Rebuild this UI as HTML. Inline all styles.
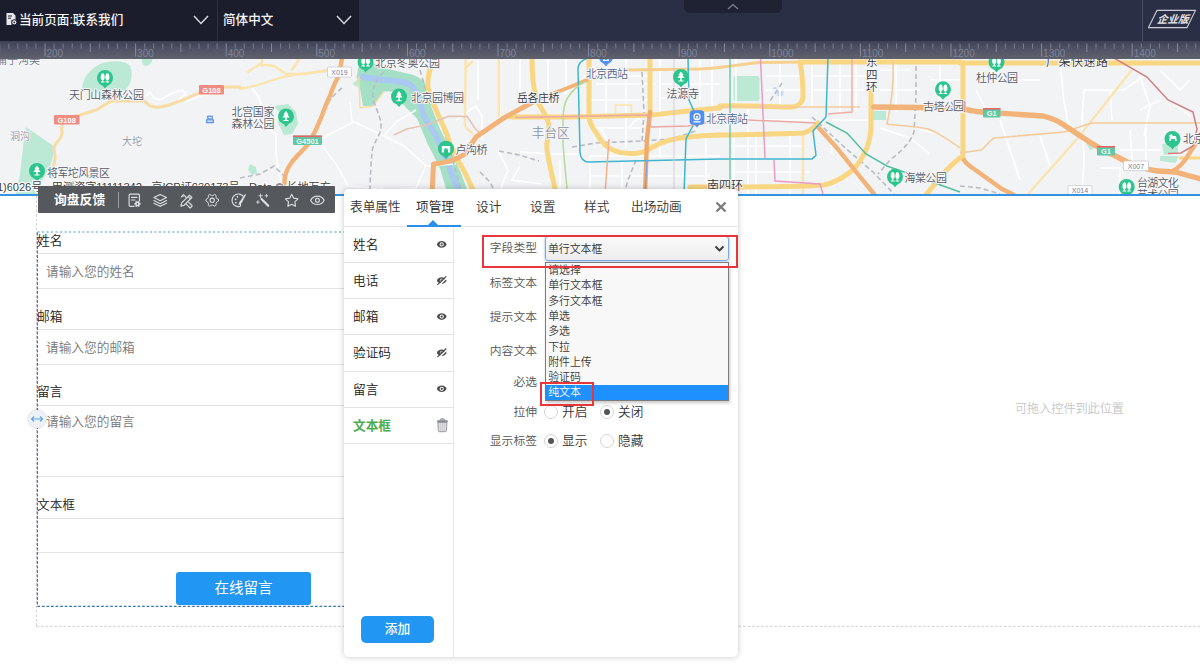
<!DOCTYPE html>
<html lang="zh-CN">
<head>
<meta charset="utf-8">
<title>联系我们</title>
<style>
*{box-sizing:border-box;margin:0;padding:0}
html,body{width:1200px;height:672px;overflow:hidden;background:#fff}
body{font-family:"Liberation Sans","Noto Sans CJK SC",sans-serif;position:relative;color:#333;font-weight:350}
.abs{position:absolute}
/* top bar */
#topbar{left:0;top:0;width:1200px;height:41px;background:#2b2f45}
#topleft{left:0;top:0;width:359px;height:41px;background:#1b1d2c}
.tb-txt{color:#f4f4f4;font-weight:500;font-size:12.600px;line-height:16px;white-space:nowrap}
#sep1{left:217px;top:0;width:1px;height:41px;background:#2d3042}
#toptab{left:684px;top:0;width:98px;height:13px;background:#1f2233;border-radius:0 0 6px 6px}
#sep2{left:1142px;top:0;width:1px;height:41px;background:#4a4e65}
/* ruler */
#ruler{left:0;top:40.500px;width:1200px;height:18.100px;background:linear-gradient(#3e4154,#505365 45%,#5f616e)}
/* map */
#map{left:0;top:58px;width:1200px;height:137px;background:#f2f3f5;overflow:hidden}
#blueline{left:0;top:193.800px;width:1200px;height:2.200px;background:#3492e0}
/* toolbar */
#toolbar{left:38px;top:186px;width:297px;height:27px;background:#55585d;border-radius:1px}
/* form */
.lbl{font-size:12.7px;line-height:16px;color:#222;white-space:nowrap}
.inp{left:38px;width:306px;border-top:1px solid #e3e3e3;border-bottom:1px solid #e3e3e3;background:#fff}
.ph{font-size:12.7px;line-height:16px;color:#777;white-space:nowrap}
#btn{left:176px;top:571.5px;width:135px;height:33px;background:#2196f3;border-radius:3px;color:#fff;font-size:14.500px;line-height:33px;text-align:center;font-weight:400}
/* panel */
#panel{left:343.500px;top:189.300px;width:394.500px;height:467.700px;background:#fff;border-radius:5px;box-shadow:0 0 6px rgba(0,0,0,.22)}
.tab{top:199px;font-size:12.7px;line-height:16px;color:#333;white-space:nowrap}
.row{left:344px;width:109px;height:36.500px;border-bottom:1px solid #e4e4e4}
.row span{position:absolute;left:9px;top:10.400px;font-size:12.7px;line-height:16px;color:#222}
.flabel{font-size:11.800px;line-height:16px;color:#555;text-align:right;width:70px;left:467px;white-space:nowrap}
.radio{width:14px;height:14px;border-radius:50%;border:1px solid #d4d4d4;background:#fff}
.radio.on::after{content:"";position:absolute;left:3px;top:3px;width:6px;height:6px;border-radius:50%;background:#555}
.rl{font-size:12.7px;line-height:16px;color:#333;white-space:nowrap}
.opt{left:545px;width:182px;height:15.300px;font-size:10.900px;line-height:15.300px;padding-left:2.700px;color:#3a3a3a;white-space:nowrap}
</style>
</head>
<body>
<!-- MAP -->
<div id="map" class="abs">
<svg id="mapsvg" width="1200" height="136" viewBox="0 58 1200 136" style="position:absolute;left:0;top:0;font-family:'Liberation Sans','Noto Sans CJK SC',sans-serif">
<rect x="0" y="40" width="1200" height="160" fill="#f2f3f5"/>
<!-- green areas -->
<g fill="#bce9d5">
<path d="M82 90c0-10 6-20 18-26c10-4 26-4 30 2c3 6 2 16-3 22c-4 5-12 7-20 7z"/>
<path d="M142 58h10c1 4-2 7-6 8c-3 0-5-4-4-8z"/>
<path d="M26 127l29 20l-4 17l-9 17l-4 13h-22l4-20l4-35z"/>
<path d="M274 106l14-2l8 8l2 12l-6 10l-8 1l-6-12l2-10z"/>
<path d="M250 164l6 3l1 6l-5 2l-4-5z"/>
<rect x="733.5" y="76" width="26" height="25" rx="2"/>
<rect x="872" y="111" width="14" height="9"/>
<path d="M1162 144l16-1v10l-14 2z M1160 156l18 0l-2 7l-16-2z"/>
<path d="M1086 143l6 0l2 5l-4 2z"/>
</g>
<!-- river: green banks + water -->
<path d="M352 84l8-6l6 4l-6 6z" fill="#bce9d5"/>
<path d="M359.800 58l26 10.500l27 6.200c8 3 12 7 14.700 12.500l4.200 20.800l8.300 21l10.400 20.700l10.400 23l6.200 16.600l2 6h-20l-2.750-6l-6.250-20.800l-12.500-25l-10.500-25l-12.400-12.500l-12.600-14.600h-8.250l-10.450 14.600h-10.300l-3.200-18.750l-3.100-10.450z" fill="#a5dfc6"/>
<path d="M363 76.800c4 1 8 1.500 12.400 2.200c10 1.500 22 1.500 31.300 4c5 2 8 6 10.300 10.500c3 6 4 14 6.300 20.800c3 7 8 14 12.500 20.700l12.500 29.300l8.400 22.700l3 10" fill="none" stroke="#a9c9f3" stroke-width="6" stroke-linecap="round"/>
<path d="M358.750 76.800l1.250 31.200l13-2l11-14.600" fill="none" stroke="#f8dca6" stroke-width="1.500"/>
<circle cx="780" cy="93" r="3.5" fill="#c5daf5"/><circle cx="775" cy="89" r="2" fill="#c5daf5"/>
<!-- minor roads (white) -->
<g fill="none" stroke="#fff" stroke-width="1.6">
<path d="M146 96l4-4l4 6l6 2l10-6l12-4l4 4l-8 6M186 102l14-6l10-2M252 88l6 8l4 10M262 106l-4 12l6 8l12 8l0 20l2 12l4 26"/>
<path d="M318 140l36-18l30 14l20 10l22 20l-10 22l-24 2l-44-4l-12-22z"/>
<path d="M384 136l12-14l20-12M352 122l-2-20M426 166l30-2M382 186l-4 10M456 120l20-14l6 10l0 24"/>
<path d="M478 60v40M500 58v60M520 58v44M548 58v46M566 58v36M600 76h50M606 58v60M626 58v90M660 58v56M674 58v78M700 58v42M712 58v50"/>
<path d="M596 84h60M590 100h60M660 84h60M660 98h34M592 128h50M600 128l8 12l4 14M628 128l10-10l12 10M660 128v30M674 136v58M706 136v58M590 156h130M590 176h120M520 152l30 2l30 0M498 150l10 20l-8 20M520 166l-8 14l30 4M560 160v34M590 156v38M622 162v32"/>
<path d="M736 58v50M748 106v88M760 62h40M766 76h38M766 90h38M780 62v44M812 62v44M812 76h56M812 90h56M840 62v50M856 62v50M730 120h80M730 146h76M734 136v58M756 136v58M790 136v58M730 172h80M832 120h36M832 134v20M880 70h30M896 62v50M880 90h40M880 128l30 10l20 16M920 130l20 4l20 14M940 62v40M930 80h30"/>
<path d="M976 90l10 20M990 70l20 10l30 0M1060 62l4 40l6 30M1084 90h40l20-14M1084 90l-2 30l2 40l-2 34M1110 90l2 30M1140 76l10 30l-6 30M1160 70l20 20l10-10M1170 100l20 16M1000 120l10 30l10 30M1040 136l10 30M1130 130l2 30M1146 128v34M1120 150h40M1100 168h20v26M1160 100l-20 10"/>
</g>
<!-- railways -->
<g fill="none" stroke="#b9bcc4" stroke-width="1.6" stroke-dasharray="5 3">
<path d="M384 72c-8 8-12 16-11 26c2 10 8 18 8 28c0 10-8 16-9 26c-1 12-2 26-2 42"/>
<path d="M342 88c-8 6-14 14-20 24"/>
<path d="M240 178l20-4l14-8l10 10l4 18"/>
<path d="M420 70l6 20l14 30l10 30l12 44"/>
<path d="M642 72l2 40l-2 30M572 147l24-4l46-2l30-2l24-8"/>
<path d="M499 151l20 4l20 6M480 172l10 10l6 12M636 160l-8 20l-4 14"/>
<path d="M782 83l-12 18M812 117l30 28l32 28l20 21"/>
<path d="M916 66l0 30l-2 36c-4 12-14 20-24 28l-12 14"/>
<path d="M960 186l20 2l20 6"/>
</g>
<!-- light-yellow thin roads -->
<g fill="none" stroke="#fbe4ad" stroke-width="2.4" stroke-linecap="round">
<path d="M240 89c10-2 20-4 30-8c16-6 36-8 56-10"/>
<path d="M248 72l12-8l14 2l12 8l20 0l22-4M262 60v6M300 58l-8 12"/>
<path d="M499 58v58M465.800 60l-1 64.750c1 4 4 6 7.200 8.250M472 62l-7 6.500"/>
<path d="M1131 71l-54 68l-48 54"/>
<path d="M803 135v59"/>

<path d="M615.500 112v-7h16v7" stroke-width="1.600"/>
</g>
<!-- yellow roads -->
<g fill="none" stroke="#f9d682" stroke-width="5" stroke-linecap="round" stroke-linejoin="round">
<path d="M240 87h-11c-10 0-14 0-24 4c-10 3-18 8-28 11c-8 3-14 6-22 5c-6 0-8-4-11-6h-32c-6 2-10 6-16 9c-6 2-10 3-16 5l-14 4c-4 4-5 8-4 14c0 6-5 8-7 12c-3 6 1 8 0 14c-1 6-3 12-3 18" stroke="#f8dca6" stroke-width="3"/>
<path d="M532 58c0 14 1 28 4 40c4 10 12 18 13 28c0 8-3 16-2 24c2 14 6 28 9 44"/>
<path d="M589 58v56c0 8 3 14 8 20c4 8 10 14 18 17c8 3 16 3 24 2c6-1 10-4 14-6c10-6 24-9 36-10c10-1 20-2 31-2"/>
<path d="M650 58v56"/>
<path d="M511 117l60 0l80-2c20-2 46-5 69-7"/>
<path d="M627 70l73-1c30-1 45-6 60-6.500l43-.500" stroke="#f7d08f" stroke-width="3"/><path d="M803 62h157"/>
<path d="M960 63h240"/>
<path d="M800 62c2 10 3 22 3 34c0 6-4 10-10 11c-20 0-50-2-73-1"/>
<path d="M720 135c28 0 56-1 83-2c8-2 12-6 15-10"/>
<path d="M871 89v40c-1 10-3 18-7 25c-4 8-8 14-15 19c-8 6-16 10-25 12c-30 2-70 2-104 2"/>
<path d="M720 187h-30"/>
<path d="M963 63v96"/>
<path d="M434 58c-4 10-7 20-6 29c2 12 8 22 12 32c4 8 8 16 10 25c4 10 10 20 15 29l10 21"/>
<path d="M960 158c-8 6-14 12-19 19c-6 6-10 12-15 18"/>
<path d="M1200 158h-20" stroke-width="3"/>
</g>
<!-- light orange thin roads -->
<g fill="none" stroke="#f5cb9c" stroke-width="1.6">
<path d="M893 62c1 20-2 44-6 62c14 2 28 2 41 5c12 4 22 12 32 19"/>
<path d="M960 153l21-3c6-4 8-10 14-12l69-6c10-2 20-8 29-9h107"/>
<path d="M860 107h-140"/><path d="M394 135l12.700-6l20.800-4.250l20.500-8.350h19l8.400 12.600l4.600 4" stroke="#e6c4b4"/>
</g>
<!-- orange roads -->
<g fill="none" stroke="#f3b277" stroke-width="4.4" stroke-linecap="round" stroke-linejoin="round">
<path d="M342 58c-1 8-2 12-4 19c-3 6-6 12-8 19c-4 8-6 14-9 22c-4 10-8 18-12 25c-6 8-12 12-17 19c-4 5-6 10-7 15l-2 17"/>
<path d="M432 194l1.500-30c12-1 24-5 31.500-10l11-17l27-18.500l34-18.750" stroke-width="5"/>
<path d="M537 99.750l33-12.750l17-7" stroke-width="3.600"/>
<path d="M650 112c-1 10-2 18-3 27l-2 55" stroke="#f0aa6c"/>
<path d="M818 127l19 21l20 25l17 21"/>
<path d="M874 107l86 1c8 2 14 4 23 4l60 4c8 2 14 4 21 9l21 14c6 4 12 8 17 10l25 13c10 4 20 8 31 9c8 1 14 0 21 2l22 6" stroke-width="5.400"/>
<path d="M1172 171c8-3 13-10 17-17l11-17" stroke-width="4.400"/>
<path d="M964 160c2 4 6 6 10 9l28 20l12 6"/>

</g>
<!-- subway lines -->
<g fill="none" stroke-width="1.5">
<path d="M588 58c-6 2-10 6-10 11l2 83c0 6 4 10 8 10l132-3l92 0c2-2 4-3 4-4l-3-24l13-14l2-60" stroke="#3fb6cf"/>
<path d="M688 58l1 42l8 18l-11 21l-2 55" stroke="#3fb6cf"/>
<path d="M586 81c-8 4-14 10-18.500 17c-4 6-4 14-4.500 20v25c1 16 3 34 4.500 51" stroke="#b7d99a"/>
<path d="M609 139l-4 55" stroke="#f0b08a"/>
<path d="M647 160l-2 34" stroke="#7f9fe0" stroke-width="1.2"/>
<path d="M730 58v136" stroke="#72c9a6"/><path d="M674 58v136" stroke="#cfc6d6" stroke-width="1"/>
<path d="M826 122l21 11l19 21l21 12l73 26" stroke="#52bfa0"/>
<path d="M760.500 58l4.500 100M774 160l1 21l45 3l3 10" stroke="#e89cc4"/>
<path d="M515 117.500l132-2.500l4 12l37-1l40-7l88 4" stroke="#e9aaa6"/>
<path d="M852 58v54l-24 2" stroke="#efb0a8"/>
<path d="M1114 58l33 19l21 23l25 12l4 17l-4 17l-12 7l-13 .5" stroke="#d27f80" stroke-width="1.500"/>
</g>
<!-- road badges -->
<g font-size="7.5" text-anchor="middle" font-weight="bold">
<rect x="199" y="85" width="25" height="9.500" rx="1" fill="#f08c82"/><text x="211.500" y="92.600" fill="#fff">G108</text>
<rect x="54" y="115" width="25.500" height="9.500" rx="1" fill="#f08c82"/><text x="66.700" y="122.600" fill="#fff">G108</text>
<rect x="293" y="135.500" width="29" height="9.500" rx="1" fill="#62c7a4"/><rect x="293" y="135.500" width="29" height="1.600" fill="#e8666a"/><text x="307.500" y="143.600" fill="#eafaf3">G4501</text>
<rect x="983" y="108" width="17.500" height="9.500" rx="1" fill="#62c7a4"/><rect x="983" y="108" width="17.500" height="1.600" fill="#e8666a"/><text x="991.800" y="116" fill="#eafaf3">G1</text>
<rect x="1097" y="146" width="18" height="9.500" rx="1" fill="#62c7a4"/><rect x="1097" y="146" width="18" height="1.600" fill="#e8666a"/><text x="1106" y="154" fill="#eafaf3">G1</text>
<g font-weight="normal" font-size="7">
<rect x="327.500" y="67" width="24" height="10" rx="1" fill="#fff" stroke="#c9ccd3" stroke-width=".8"/><text x="339.500" y="74.600" fill="#77809a">X019</text>
<rect x="1123.500" y="161" width="25" height="9.600" rx="1" fill="#fff" stroke="#c9ccd3" stroke-width=".8"/><text x="1136" y="168.500" fill="#77809a">X007</text>
<rect x="1068" y="185.600" width="24" height="10" rx="1" fill="#fff" stroke="#c9ccd3" stroke-width=".8"/><text x="1080" y="193" fill="#77809a">X014</text>
</g></g>
<!-- icons -->
<g transform="translate(105 78)"><circle r="8" fill="#2dc48d"/><path d="M0 8L-2.5 6.5h5z M0 10.5l-2.8-3.4h5.6z" fill="#2dc48d"/><path d="M-2.3 -4.8c1.3 0 2 1.6 2 4.3c0 1.6-.6 2.4-1.4 2.5v1.6h1.2v1h-3.6v-1h1.2v-1.6c-.8-.1-1.4-.9-1.4-2.5c0-2.7.7-4.3 2-4.3z" fill="#fff"/><path d="M2.4 -4.8c1.3 0 2 1.6 2 4.3c0 1.6-.6 2.4-1.4 2.5v1.6h1.2v1h-3.6v-1h1.2v-1.6c-.8-.1-1.4-.9-1.4-2.5c0-2.7.7-4.3 2-4.3z" fill="#fff"/></g>
<g transform="translate(37 171)"><circle r="8" fill="#2dc48d"/><path d="M0 10.5l-2.8-3.4h5.6z" fill="#2dc48d"/><path d="M0 -5.5l2.6 3.5h-1.2l2.2 3h-2.8v2.6h1.8v1h-5.2v-1h1.8v-2.6h-2.8l2.2-3h-1.2z" fill="#fff"/></g>
<g transform="translate(286 116.400)"><circle r="8" fill="#2dc48d"/><path d="M0 10.5l-2.8-3.4h5.6z" fill="#2dc48d"/><path d="M0 -5.5l2.6 3.5h-1.2l2.2 3h-2.8v2.6h1.8v1h-5.2v-1h1.8v-2.6h-2.8l2.2-3h-1.2z" fill="#fff"/></g>
<g transform="translate(365.600 62)"><circle r="8" fill="#2dc48d"/><path d="M0 8L-2.5 6.5h5z M0 10.5l-2.8-3.4h5.6z" fill="#2dc48d"/><path d="M-2.3 -4.8c1.3 0 2 1.6 2 4.3c0 1.6-.6 2.4-1.4 2.5v1.6h1.2v1h-3.6v-1h1.2v-1.6c-.8-.1-1.4-.9-1.4-2.5c0-2.7.7-4.3 2-4.3z" fill="#fff"/><path d="M2.4 -4.8c1.3 0 2 1.6 2 4.3c0 1.6-.6 2.4-1.4 2.5v1.6h1.2v1h-3.6v-1h1.2v-1.6c-.8-.1-1.4-.9-1.4-2.5c0-2.7.7-4.3 2-4.3z" fill="#fff"/></g>
<g transform="translate(399 96.600)"><circle r="8" fill="#2dc48d"/><path d="M0 10.5l-2.8-3.4h5.6z" fill="#2dc48d"/><path d="M0 -5.5l2.6 3.5h-1.2l2.2 3h-2.8v2.6h1.8v1h-5.2v-1h1.8v-2.6h-2.8l2.2-3h-1.2z" fill="#fff"/></g>
<g transform="translate(681 77)"><circle r="8" fill="#2dc48d"/><path d="M0 10.5l-2.8-3.4h5.6z" fill="#2dc48d"/><path d="M0 -5.5l2.6 3.5h-1.2l2.2 3h-2.8v2.6h1.8v1h-5.2v-1h1.8v-2.6h-2.8l2.2-3h-1.2z" fill="#fff"/></g>
<g transform="translate(943 89.300)"><circle r="8" fill="#2dc48d"/><path d="M0 8L-2.5 6.5h5z M0 10.5l-2.8-3.4h5.6z" fill="#2dc48d"/><path d="M-2.3 -4.8c1.3 0 2 1.6 2 4.3c0 1.6-.6 2.4-1.4 2.5v1.6h1.2v1h-3.6v-1h1.2v-1.6c-.8-.1-1.4-.9-1.4-2.5c0-2.7.7-4.3 2-4.3z" fill="#fff"/><path d="M2.4 -4.8c1.3 0 2 1.6 2 4.3c0 1.6-.6 2.4-1.4 2.5v1.6h1.2v1h-3.6v-1h1.2v-1.6c-.8-.1-1.4-.9-1.4-2.5c0-2.7.7-4.3 2-4.3z" fill="#fff"/></g>
<g transform="translate(895 176.800)"><circle r="8" fill="#2dc48d"/><path d="M0 8L-2.5 6.5h5z M0 10.5l-2.8-3.4h5.6z" fill="#2dc48d"/><path d="M-2.3 -4.8c1.3 0 2 1.6 2 4.3c0 1.6-.6 2.4-1.4 2.5v1.6h1.2v1h-3.6v-1h1.2v-1.6c-.8-.1-1.4-.9-1.4-2.5c0-2.7.7-4.3 2-4.3z" fill="#fff"/><path d="M2.4 -4.8c1.3 0 2 1.6 2 4.3c0 1.6-.6 2.4-1.4 2.5v1.6h1.2v1h-3.6v-1h1.2v-1.6c-.8-.1-1.4-.9-1.4-2.5c0-2.7.7-4.3 2-4.3z" fill="#fff"/></g>
<g transform="translate(996.500 62)"><circle r="8" fill="#2dc48d"/><path d="M0 8L-2.5 6.5h5z M0 10.5l-2.8-3.4h5.6z" fill="#2dc48d"/><path d="M-2.3 -4.8c1.3 0 2 1.6 2 4.3c0 1.6-.6 2.4-1.4 2.5v1.6h1.2v1h-3.6v-1h1.2v-1.6c-.8-.1-1.4-.9-1.4-2.5c0-2.7.7-4.3 2-4.3z" fill="#fff"/><path d="M2.4 -4.8c1.3 0 2 1.6 2 4.3c0 1.6-.6 2.4-1.4 2.5v1.6h1.2v1h-3.6v-1h1.2v-1.6c-.8-.1-1.4-.9-1.4-2.5c0-2.7.7-4.3 2-4.3z" fill="#fff"/></g>
<g transform="translate(1126.700 187)"><circle r="8" fill="#2dc48d"/><path d="M0 8L-2.5 6.5h5z M0 10.5l-2.8-3.4h5.6z" fill="#2dc48d"/><path d="M-2.3 -4.8c1.3 0 2 1.6 2 4.3c0 1.6-.6 2.4-1.4 2.5v1.6h1.2v1h-3.6v-1h1.2v-1.6c-.8-.1-1.4-.9-1.4-2.5c0-2.7.7-4.3 2-4.3z" fill="#fff"/><path d="M2.4 -4.8c1.3 0 2 1.6 2 4.3c0 1.6-.6 2.4-1.4 2.5v1.6h1.2v1h-3.6v-1h1.2v-1.6c-.8-.1-1.4-.9-1.4-2.5c0-2.7.7-4.3 2-4.3z" fill="#fff"/></g>
<g transform="translate(446 148.700)"><circle r="8" fill="#2dc48d"/><path d="M0 10.500l-2.800-3.400h5.600z" fill="#2dc48d"/><path d="M-4.200 3.800v-6.600h8.400v6.600h-2.200v-2.200a2 2 0 0 0-4 0v2.200z" fill="#fff"/></g>
<g transform="translate(1172.500 139)"><circle r="8" fill="#2dc48d"/><path d="M0 10.500l-2.800-3.400h5.600z" fill="#2dc48d"/><path d="M-3.500 -3.500l2.500-1.500l1.500 2h3l.8 5h-1.400l-.6-2h-3.600l-.6 2h-1.400l.6-4z" fill="#fff"/></g>
<g transform="translate(606 57)"><circle r="7" fill="#4f8ff0"/><path d="M0 9.500l-2.500-3.200h5z" fill="#4f8ff0"/><path d="M-3 3.500h6M-2 3.500v-3h4v3" stroke="#fff" stroke-width="1.200" fill="none"/></g>
<g transform="translate(697 117.500)"><rect x="-7.300" y="-7.300" width="14.600" height="14.600" rx="3.500" fill="#4f8ff0"/><path d="M0 10l-2.500-3h5z" fill="#4f8ff0"/><circle cy="-.8" r="3" fill="none" stroke="#fff" stroke-width="1.300"/><path d="M-3.600 4.300h7.200M-1.200 -.8h2.400M0 -.8v3" stroke="#fff" stroke-width="1.200" fill="none"/></g>
<g transform="translate(210 119.500)" fill="none" stroke="#5b95e8" stroke-width="1.300"><rect x="-2.200" y="-3.200" width="4.400" height="2.600"/><path d="M-3.300 3h6.600v-2.600h-6.600z"/></g>
<!-- labels -->
<g font-size="11" fill="#555a66" stroke="#f7f7f9" stroke-width="2" paint-order="stroke" stroke-linejoin="round">
<text x="-4" y="63.500" fill="#6d7686">蒲子沟美</text>
<text x="69" y="98.500" textLength="75">天门山森林公园</text>
<text x="47" y="176.600" textLength="63">将军坨风景区</text>
<text x="231.500" y="116" textLength="43">北宫国家</text>
<text x="231.500" y="127.700" textLength="43">森林公园</text>
<text x="375" y="67" textLength="65">北京冬奥公园</text>
<text x="411" y="101.700" textLength="53">北京园博园</text>
<text x="455.600" y="154" textLength="32">卢沟桥</text>
<text x="517" y="101.700" textLength="42.600" fill="#33363d">岳各庄桥</text>
<text x="586" y="78" textLength="42" fill="#586a8c">北京西站</text>
<text x="666.500" y="98" textLength="32.500">法源寺</text>
<text x="706" y="123" textLength="42" fill="#586a8c">北京南站</text>
<text x="707" y="189.500" font-size="12" textLength="36" fill="#33363d">南四环</text>
<text x="866" y="66" font-size="11.500" fill="#33363d">东</text>
<text x="866" y="79" font-size="11.500" fill="#33363d">四</text>
<text x="866" y="90.500" font-size="11.500" fill="#33363d">环</text>
<text x="923" y="111" textLength="43">古塔公园</text>
<text x="904.400" y="182" textLength="42.600">海棠公园</text>
<text x="976" y="81.500" textLength="42">杜仲公园</text>
<text x="1046" y="66.300" font-size="12" textLength="62" fill="#33363d">广渠快速路</text>
<text x="1183" y="143">北京</text>
<text x="1137" y="186.700" textLength="41.700">台湖文化</text>
<text x="1137" y="198.500" textLength="41.700">艺术公园</text>
<text x="953" y="110">园</text>
</g>
<g font-size="10" fill="#8b95aa" stroke="#f7f7f9" stroke-width="1.600" paint-order="stroke">
<text x="10" y="139.500">洞沟</text>
<text x="122" y="145">大坨</text>
<text x="531.700" y="136.800" font-size="12.600" textLength="38">丰台区</text>
</g>
<!-- copyright -->
<text x="-3" y="190.500" font-size="11.300" fill="#3d3d3d" stroke="#fbfbfb" stroke-width="2.400" paint-order="stroke" textLength="334" style="white-space:pre">1)6026号 - 甲测资字11111342 - 京ICP证030173号 - Data © 长地万方</text>

</svg>
</div>
<div id="blueline" class="abs"></div>

<!-- TOP BAR -->
<div id="topbar" class="abs"></div>
<div id="topleft" class="abs"></div>
<div id="sep1" class="abs"></div>
<svg class="abs" style="left:5px;top:12.400px" width="13" height="14" viewBox="0 0 13 14"><path d="M1.5 1h6.5l2.5 2.5v4.5h-4v5h-5z" fill="#e8e8ea"/><circle cx="9.3" cy="10.3" r="2.6" fill="#e8e8ea" stroke="#1b1d2c" stroke-width="1"/><circle cx="9.3" cy="10.3" r="0.9" fill="#1b1d2c"/><path d="M3 4h4M3 6.2h3" stroke="#1b1d2c" stroke-width="1"/></svg>
<div class="abs tb-txt" style="left:19px;top:11.600px">当前页面:联系我们</div>
<svg class="abs" style="left:192px;top:14.200px" width="18" height="12" viewBox="0 0 18 12"><path d="M2 2l7 7.5l7-7.5" fill="none" stroke="#dcdde2" stroke-width="1.4"/></svg>
<div class="abs tb-txt" style="left:223px;top:11.600px">简体中文</div>
<svg class="abs" style="left:335px;top:14.200px" width="18" height="12" viewBox="0 0 18 12"><path d="M2 2l7 7.5l7-7.5" fill="none" stroke="#dcdde2" stroke-width="1.4"/></svg>
<div id="toptab" class="abs"></div>
<svg class="abs" style="left:726px;top:2px" width="14" height="9" viewBox="0 0 14 9"><path d="M2 7l5-4.5l5 4.5" fill="none" stroke="#7d8094" stroke-width="1.3"/></svg>
<div id="sep2" class="abs"></div>
<svg class="abs" style="left:1148px;top:8px" width="50" height="22" viewBox="0 0 50 22" font-family="'Liberation Sans','Noto Sans CJK SC',sans-serif"><path d="M9 2.400H47.500L39 19.600H.500z" fill="none" stroke="#c9ccd8" stroke-width="1.100"/><text x="24.500" y="15.300" font-size="10.500" font-weight="bold" fill="#e3e4ea" text-anchor="middle" transform="translate(5.570 0) skewX(-20)">企业版</text></svg>

<!-- RULER -->
<div id="ruler" class="abs"></div>
<svg id="rulersvg" class="abs" style="left:0;top:40px" width="1200" height="18" viewBox="0 0 1200 18" font-family="'Liberation Sans',sans-serif">
<path d="M-0.3 3.500V12" stroke="#9397a8" stroke-width=".800"/>
<path d="M8.8 3.500V8.600" stroke="#8b8fa1" stroke-width=".700"/>
<path d="M17.8 3.500V8.600" stroke="#8b8fa1" stroke-width=".700"/>
<path d="M26.9 3.500V8.600" stroke="#8b8fa1" stroke-width=".700"/>
<path d="M35.9 3.500V8.600" stroke="#8b8fa1" stroke-width=".700"/>
<path d="M45.0 3.500V16.500" stroke="#9397a8" stroke-width=".800"/>
<text x="46.5" y="16.5" font-size="10" fill="#7e8398">200</text>
<path d="M54.1 3.500V8.600" stroke="#8b8fa1" stroke-width=".700"/>
<path d="M63.1 3.500V8.600" stroke="#8b8fa1" stroke-width=".700"/>
<path d="M72.2 3.500V8.600" stroke="#8b8fa1" stroke-width=".700"/>
<path d="M81.2 3.500V8.600" stroke="#8b8fa1" stroke-width=".700"/>
<path d="M90.3 3.500V12" stroke="#9397a8" stroke-width=".800"/>
<path d="M99.4 3.500V8.600" stroke="#8b8fa1" stroke-width=".700"/>
<path d="M108.4 3.500V8.600" stroke="#8b8fa1" stroke-width=".700"/>
<path d="M117.5 3.500V8.600" stroke="#8b8fa1" stroke-width=".700"/>
<path d="M126.5 3.500V8.600" stroke="#8b8fa1" stroke-width=".700"/>
<path d="M135.6 3.500V16.500" stroke="#9397a8" stroke-width=".800"/>
<text x="137.1" y="16.5" font-size="10" fill="#7e8398">300</text>
<path d="M144.7 3.500V8.600" stroke="#8b8fa1" stroke-width=".700"/>
<path d="M153.7 3.500V8.600" stroke="#8b8fa1" stroke-width=".700"/>
<path d="M162.8 3.500V8.600" stroke="#8b8fa1" stroke-width=".700"/>
<path d="M171.8 3.500V8.600" stroke="#8b8fa1" stroke-width=".700"/>
<path d="M180.9 3.500V12" stroke="#9397a8" stroke-width=".800"/>
<path d="M190.0 3.500V8.600" stroke="#8b8fa1" stroke-width=".700"/>
<path d="M199.0 3.500V8.600" stroke="#8b8fa1" stroke-width=".700"/>
<path d="M208.1 3.500V8.600" stroke="#8b8fa1" stroke-width=".700"/>
<path d="M217.1 3.500V8.600" stroke="#8b8fa1" stroke-width=".700"/>
<path d="M226.2 3.500V16.500" stroke="#9397a8" stroke-width=".800"/>
<text x="227.7" y="16.5" font-size="10" fill="#7e8398">400</text>
<path d="M235.3 3.500V8.600" stroke="#8b8fa1" stroke-width=".700"/>
<path d="M244.3 3.500V8.600" stroke="#8b8fa1" stroke-width=".700"/>
<path d="M253.4 3.500V8.600" stroke="#8b8fa1" stroke-width=".700"/>
<path d="M262.4 3.500V8.600" stroke="#8b8fa1" stroke-width=".700"/>
<path d="M271.5 3.500V12" stroke="#9397a8" stroke-width=".800"/>
<path d="M280.6 3.500V8.600" stroke="#8b8fa1" stroke-width=".700"/>
<path d="M289.6 3.500V8.600" stroke="#8b8fa1" stroke-width=".700"/>
<path d="M298.7 3.500V8.600" stroke="#8b8fa1" stroke-width=".700"/>
<path d="M307.7 3.500V8.600" stroke="#8b8fa1" stroke-width=".700"/>
<path d="M316.8 3.500V16.500" stroke="#9397a8" stroke-width=".800"/>
<text x="318.3" y="16.5" font-size="10" fill="#7e8398">500</text>
<path d="M325.9 3.500V8.600" stroke="#8b8fa1" stroke-width=".700"/>
<path d="M334.9 3.500V8.600" stroke="#8b8fa1" stroke-width=".700"/>
<path d="M344.0 3.500V8.600" stroke="#8b8fa1" stroke-width=".700"/>
<path d="M353.0 3.500V8.600" stroke="#8b8fa1" stroke-width=".700"/>
<path d="M362.1 3.500V12" stroke="#9397a8" stroke-width=".800"/>
<path d="M371.2 3.500V8.600" stroke="#8b8fa1" stroke-width=".700"/>
<path d="M380.2 3.500V8.600" stroke="#8b8fa1" stroke-width=".700"/>
<path d="M389.3 3.500V8.600" stroke="#8b8fa1" stroke-width=".700"/>
<path d="M398.3 3.500V8.600" stroke="#8b8fa1" stroke-width=".700"/>
<path d="M407.4 3.500V16.500" stroke="#9397a8" stroke-width=".800"/>
<text x="408.9" y="16.5" font-size="10" fill="#7e8398">600</text>
<path d="M416.5 3.500V8.600" stroke="#8b8fa1" stroke-width=".700"/>
<path d="M425.5 3.500V8.600" stroke="#8b8fa1" stroke-width=".700"/>
<path d="M434.6 3.500V8.600" stroke="#8b8fa1" stroke-width=".700"/>
<path d="M443.6 3.500V8.600" stroke="#8b8fa1" stroke-width=".700"/>
<path d="M452.7 3.500V12" stroke="#9397a8" stroke-width=".800"/>
<path d="M461.8 3.500V8.600" stroke="#8b8fa1" stroke-width=".700"/>
<path d="M470.8 3.500V8.600" stroke="#8b8fa1" stroke-width=".700"/>
<path d="M479.9 3.500V8.600" stroke="#8b8fa1" stroke-width=".700"/>
<path d="M488.9 3.500V8.600" stroke="#8b8fa1" stroke-width=".700"/>
<path d="M498.0 3.500V16.500" stroke="#9397a8" stroke-width=".800"/>
<text x="499.5" y="16.5" font-size="10" fill="#7e8398">700</text>
<path d="M507.1 3.500V8.600" stroke="#8b8fa1" stroke-width=".700"/>
<path d="M516.1 3.500V8.600" stroke="#8b8fa1" stroke-width=".700"/>
<path d="M525.2 3.500V8.600" stroke="#8b8fa1" stroke-width=".700"/>
<path d="M534.2 3.500V8.600" stroke="#8b8fa1" stroke-width=".700"/>
<path d="M543.3 3.500V12" stroke="#9397a8" stroke-width=".800"/>
<path d="M552.4 3.500V8.600" stroke="#8b8fa1" stroke-width=".700"/>
<path d="M561.4 3.500V8.600" stroke="#8b8fa1" stroke-width=".700"/>
<path d="M570.5 3.500V8.600" stroke="#8b8fa1" stroke-width=".700"/>
<path d="M579.5 3.500V8.600" stroke="#8b8fa1" stroke-width=".700"/>
<path d="M588.6 3.500V16.500" stroke="#9397a8" stroke-width=".800"/>
<text x="590.1" y="16.5" font-size="10" fill="#7e8398">800</text>
<path d="M597.7 3.500V8.600" stroke="#8b8fa1" stroke-width=".700"/>
<path d="M606.7 3.500V8.600" stroke="#8b8fa1" stroke-width=".700"/>
<path d="M615.8 3.500V8.600" stroke="#8b8fa1" stroke-width=".700"/>
<path d="M624.8 3.500V8.600" stroke="#8b8fa1" stroke-width=".700"/>
<path d="M633.9 3.500V12" stroke="#9397a8" stroke-width=".800"/>
<path d="M643.0 3.500V8.600" stroke="#8b8fa1" stroke-width=".700"/>
<path d="M652.0 3.500V8.600" stroke="#8b8fa1" stroke-width=".700"/>
<path d="M661.1 3.500V8.600" stroke="#8b8fa1" stroke-width=".700"/>
<path d="M670.1 3.500V8.600" stroke="#8b8fa1" stroke-width=".700"/>
<path d="M679.2 3.500V16.500" stroke="#9397a8" stroke-width=".800"/>
<text x="680.7" y="16.5" font-size="10" fill="#7e8398">900</text>
<path d="M688.3 3.500V8.600" stroke="#8b8fa1" stroke-width=".700"/>
<path d="M697.3 3.500V8.600" stroke="#8b8fa1" stroke-width=".700"/>
<path d="M706.4 3.500V8.600" stroke="#8b8fa1" stroke-width=".700"/>
<path d="M715.4 3.500V8.600" stroke="#8b8fa1" stroke-width=".700"/>
<path d="M724.5 3.500V12" stroke="#9397a8" stroke-width=".800"/>
<path d="M733.6 3.500V8.600" stroke="#8b8fa1" stroke-width=".700"/>
<path d="M742.6 3.500V8.600" stroke="#8b8fa1" stroke-width=".700"/>
<path d="M751.7 3.500V8.600" stroke="#8b8fa1" stroke-width=".700"/>
<path d="M760.7 3.500V8.600" stroke="#8b8fa1" stroke-width=".700"/>
<path d="M769.8 3.500V16.500" stroke="#9397a8" stroke-width=".800"/>
<text x="771.3" y="16.5" font-size="10" fill="#7e8398">1000</text>
<path d="M778.9 3.500V8.600" stroke="#8b8fa1" stroke-width=".700"/>
<path d="M787.9 3.500V8.600" stroke="#8b8fa1" stroke-width=".700"/>
<path d="M797.0 3.500V8.600" stroke="#8b8fa1" stroke-width=".700"/>
<path d="M806.0 3.500V8.600" stroke="#8b8fa1" stroke-width=".700"/>
<path d="M815.1 3.500V12" stroke="#9397a8" stroke-width=".800"/>
<path d="M824.2 3.500V8.600" stroke="#8b8fa1" stroke-width=".700"/>
<path d="M833.2 3.500V8.600" stroke="#8b8fa1" stroke-width=".700"/>
<path d="M842.3 3.500V8.600" stroke="#8b8fa1" stroke-width=".700"/>
<path d="M851.3 3.500V8.600" stroke="#8b8fa1" stroke-width=".700"/>
<path d="M860.4 3.500V16.500" stroke="#9397a8" stroke-width=".800"/>
<text x="861.9" y="16.5" font-size="10" fill="#7e8398">1100</text>
<path d="M869.5 3.500V8.600" stroke="#8b8fa1" stroke-width=".700"/>
<path d="M878.5 3.500V8.600" stroke="#8b8fa1" stroke-width=".700"/>
<path d="M887.6 3.500V8.600" stroke="#8b8fa1" stroke-width=".700"/>
<path d="M896.6 3.500V8.600" stroke="#8b8fa1" stroke-width=".700"/>
<path d="M905.7 3.500V12" stroke="#9397a8" stroke-width=".800"/>
<path d="M914.8 3.500V8.600" stroke="#8b8fa1" stroke-width=".700"/>
<path d="M923.8 3.500V8.600" stroke="#8b8fa1" stroke-width=".700"/>
<path d="M932.9 3.500V8.600" stroke="#8b8fa1" stroke-width=".700"/>
<path d="M941.9 3.500V8.600" stroke="#8b8fa1" stroke-width=".700"/>
<path d="M951.0 3.500V16.500" stroke="#9397a8" stroke-width=".800"/>
<text x="952.5" y="16.5" font-size="10" fill="#7e8398">1200</text>
<path d="M960.1 3.500V8.600" stroke="#8b8fa1" stroke-width=".700"/>
<path d="M969.1 3.500V8.600" stroke="#8b8fa1" stroke-width=".700"/>
<path d="M978.2 3.500V8.600" stroke="#8b8fa1" stroke-width=".700"/>
<path d="M987.2 3.500V8.600" stroke="#8b8fa1" stroke-width=".700"/>
<path d="M996.3 3.500V12" stroke="#9397a8" stroke-width=".800"/>
<path d="M1005.4 3.500V8.600" stroke="#8b8fa1" stroke-width=".700"/>
<path d="M1014.4 3.500V8.600" stroke="#8b8fa1" stroke-width=".700"/>
<path d="M1023.5 3.500V8.600" stroke="#8b8fa1" stroke-width=".700"/>
<path d="M1032.5 3.500V8.600" stroke="#8b8fa1" stroke-width=".700"/>
<path d="M1041.6 3.500V16.500" stroke="#9397a8" stroke-width=".800"/>
<text x="1043.1" y="16.5" font-size="10" fill="#7e8398">1300</text>
<path d="M1050.7 3.500V8.600" stroke="#8b8fa1" stroke-width=".700"/>
<path d="M1059.7 3.500V8.600" stroke="#8b8fa1" stroke-width=".700"/>
<path d="M1068.8 3.500V8.600" stroke="#8b8fa1" stroke-width=".700"/>
<path d="M1077.8 3.500V8.600" stroke="#8b8fa1" stroke-width=".700"/>
<path d="M1086.9 3.500V12" stroke="#9397a8" stroke-width=".800"/>
<path d="M1096.0 3.500V8.600" stroke="#8b8fa1" stroke-width=".700"/>
<path d="M1105.0 3.500V8.600" stroke="#8b8fa1" stroke-width=".700"/>
<path d="M1114.1 3.500V8.600" stroke="#8b8fa1" stroke-width=".700"/>
<path d="M1123.1 3.500V8.600" stroke="#8b8fa1" stroke-width=".700"/>
<path d="M1132.2 3.500V16.500" stroke="#9397a8" stroke-width=".800"/>
<text x="1133.7" y="16.5" font-size="10" fill="#7e8398">1400</text>
<path d="M1141.3 3.500V8.600" stroke="#8b8fa1" stroke-width=".700"/>
<path d="M1150.3 3.500V8.600" stroke="#8b8fa1" stroke-width=".700"/>
<path d="M1159.4 3.500V8.600" stroke="#8b8fa1" stroke-width=".700"/>
<path d="M1168.4 3.500V8.600" stroke="#8b8fa1" stroke-width=".700"/>
<path d="M1177.5 3.500V12" stroke="#9397a8" stroke-width=".800"/>
<path d="M1186.6 3.500V8.600" stroke="#8b8fa1" stroke-width=".700"/>
<path d="M1195.6 3.500V8.600" stroke="#8b8fa1" stroke-width=".700"/>
</svg>

<!-- RIGHT PLACEHOLDER -->
<div class="abs" style="left:1015px;top:402.200px;font-size:12.100px;line-height:14px;color:#c6c6c6;white-space:nowrap">可拖入控件到此位置</div>

<!-- FORM -->
<svg class="abs" style="left:0;top:190px" width="1200" height="440" viewBox="0 190 1200 440" fill="none">
<path d="M36.500 196V626.300" stroke="#ddcfcf" stroke-width="1" stroke-dasharray="2.700 1.800"/>
<path d="M36.500 626.300H1200" stroke="#cfcfcf" stroke-width="1" stroke-dasharray="2.700 1.800"/>
<path d="M37.400 232H344" stroke="#8ebbe7" stroke-width="1.600" stroke-dasharray="2.200 2.300"/>
<path d="M37.400 232.500V606.400" stroke="#3573c0" stroke-width="1.100" stroke-dasharray="2.900 1.600"/>
<path d="M37.400 606.400H344" stroke="#3d72ad" stroke-width="1.100" stroke-dasharray="2.700 1.850"/>
</svg>
<div class="abs lbl" style="left:37px;top:233px">姓名</div>
<div class="abs inp" style="top:253px;height:36px"></div>
<div class="abs ph" style="left:46px;top:263.5px">请输入您的姓名</div>
<div class="abs lbl" style="left:37px;top:308.5px">邮箱</div>
<div class="abs inp" style="top:329px;height:36px"></div>
<div class="abs ph" style="left:46px;top:339.5px">请输入您的邮箱</div>
<div class="abs lbl" style="left:37px;top:384px">留言</div>
<div class="abs inp" style="top:405px;height:72px"></div>
<div class="abs ph" style="left:46px;top:414px">请输入您的留言</div>
<div class="abs lbl" style="left:37px;top:497px">文本框</div>
<div class="abs inp" style="top:517.5px;height:35.5px"></div>
<div id="btn" class="abs">在线留言</div>
<!-- resize handle -->
<div class="abs" style="left:28px;top:410px;width:18px;height:18px;border-radius:50%;background:#eef1f5;box-shadow:0 0 2px rgba(0,0,0,.25)"></div>
<svg class="abs" style="left:30px;top:414px" width="14" height="10" viewBox="0 0 14 10"><path d="M1.5 5h11M4 2.5L1.5 5L4 7.5M10 2.5L12.5 5L10 7.5" fill="none" stroke="#5aa5e8" stroke-width="1.1"/></svg>

<!-- TOOLBAR -->
<div id="toolbar" class="abs"></div>
<div class="abs" style="left:54px;top:191.5px;font-size:12.8px;line-height:16px;font-weight:bold;color:#fff;white-space:nowrap">询盘反馈</div>
<div class="abs" style="left:118px;top:192px;width:1px;height:16px;background:#9a9c9f"></div>
<svg id="tbicons" class="abs" style="left:124px;top:190px" width="210" height="20" viewBox="0 0 210 20" fill="none" stroke="#dedfe0" stroke-width="1.250" stroke-linecap="round" stroke-linejoin="round">
<g transform="translate(10.5 10.3) scale(0.9) translate(-10.5 -10.3)">
<path d="M16.0 10.8V4.800000000000001a1.3 1.3 0 0 0 -1.3 -1.3H5.8a1.3 1.3 0 0 0 -1.3 1.3V15.8a1.3 1.3 0 0 0 1.3 1.3H10.0"/>
<path d="M7.2 7.1000000000000005H13.3M7.2 10.0H11.0"/>
<path d="M17.07 13.87L17.07 14.73L16.02 15.22L15.70 15.76L15.81 16.92L15.06 17.35L14.11 16.68L13.49 16.68L12.54 17.35L11.79 16.92L11.90 15.76L11.58 15.22L10.53 14.73L10.53 13.87L11.58 13.38L11.90 12.84L11.79 11.68L12.54 11.25L13.49 11.92L14.11 11.92L15.06 11.25L15.81 11.68L15.70 12.84L16.02 13.38z" fill="#e9e9ea" stroke-width=".6"/><circle cx="13.8" cy="14.3" r="1" fill="#55585d" stroke="none"/>
</g>
<g transform="translate(36.2 10.3) scale(0.9) translate(-36.2 -10.3)">
<path d="M36.2 3.8000000000000007L43.2 7.300000000000001L36.2 10.8L29.200000000000003 7.300000000000001z"/>
<path d="M29.200000000000003 10.5L36.2 14.0L43.2 10.5M29.200000000000003 13.5L36.2 17.0L43.2 13.5"/>
</g>
<g transform="translate(62.7 10.3) scale(0.9) translate(-62.7 -10.3)">
<path d="M56.2 16.8l1-3.6l8.6-8.6l2.6 2.6l-8.6 8.6z M64.3 6.1000000000000005l2.6 2.6"/>
<path d="M56.7 6.500000000000001l2.4-2.4l3.6 3.6M64.9 12.5l4 4l-2.4 2.4l-4-4"/>
<path d="M58.2 6.700000000000001l1.2-1.2M66.3 14.9l1.2-1.2" stroke-width=".9"/>
</g>
<g transform="translate(88.2 10.3) scale(0.9) translate(-88.2 -10.3)">
<path d="M95.14 9.39L95.14 11.21L93.19 12.37L92.48 13.59L92.46 15.85L90.88 16.77L88.90 15.65L87.50 15.65L85.52 16.77L83.94 15.85L83.92 13.59L83.21 12.37L81.26 11.21L81.26 9.39L83.21 8.23L83.92 7.01L83.94 4.75L85.52 3.83L87.50 4.95L88.90 4.95L90.88 3.83L92.46 4.75L92.48 7.01L93.19 8.23z" stroke-width="1.1"/><circle cx="88.2" cy="10.3" r="2.4"/>
</g>
<g transform="translate(114.8 10.3) scale(0.9) translate(-114.8 -10.3)">
<path d="M120.39999999999999 6.9A7 7 0 1 0 115.8 17.200000000000003c1.6-.3 1.2-2 .4-2.8c-.8-1 0-2.400 1.400-2.400"/>
<circle cx="111.2" cy="9.3" r=".9" fill="#e9e9ea" stroke="none"/><circle cx="113.3" cy="6.500000000000001" r=".9" fill="#e9e9ea" stroke="none"/><circle cx="111.6" cy="12.9" r=".9" fill="#e9e9ea" stroke="none"/>
<path d="M121.8 3.8000000000000007L116.3 11.8l-1.5 3.5l3-2.200L122.0 4.800000000000001z" fill="#e9e9ea" stroke-width=".7"/>
</g>
<g transform="translate(139.3 10.3) scale(0.9) translate(-139.3 -10.3)">
<path d="M137.3 8.8L144.8 16.3" stroke-width="2.400"/>
<path d="M136.3 3.3000000000000007v4M134.3 5.300000000000001h4M142.8 3.8000000000000007v3M141.3 5.300000000000001h3M133.3 10.8v3M131.8 12.3h3" stroke-width="1"/>
</g>
<g transform="translate(167.7 10.3) scale(0.9) translate(-167.7 -10.3)">
<path d="M167.70 3.60L169.87 7.91L174.64 8.64L171.22 12.04L171.99 16.81L167.70 14.60L163.41 16.81L164.18 12.04L160.76 8.64L165.53 7.91z" stroke-width="1.200"/>
</g>
<g transform="translate(193.4 10.3) scale(0.9) translate(-193.4 -10.3)">
<path d="M185.9 10.3C188.9 4.1000000000000005 197.9 4.1000000000000005 200.9 10.3C197.9 16.5 188.9 16.5 185.9 10.3z"/><circle cx="193.4" cy="10.3" r="2.200"/>
</g>
</svg>

<!-- PANEL -->
<div id="panel" class="abs"></div>
<div class="abs tab" style="left:350px">表单属性</div>
<div class="abs tab" style="left:416px;color:#222">项管理</div>
<div class="abs tab" style="left:476px">设计</div>
<div class="abs tab" style="left:530px">设置</div>
<div class="abs tab" style="left:584px">样式</div>
<div class="abs tab" style="left:631px">出场动画</div>
<svg class="abs" style="left:715px;top:201px" width="12" height="12" viewBox="0 0 12 12"><path d="M1.500 1.500l9 9M10.500 1.500l-9 9" stroke="#7d7d7d" stroke-width="2.400" fill="none"/></svg>
<div class="abs" style="left:344px;top:226px;width:394px;height:1px;background:#e4e4e4"></div>
<div class="abs" style="left:407px;top:225px;width:54px;height:2px;background:#2a8fea"></div>
<svg class="abs" style="left:427px;top:220px" width="12" height="6" viewBox="0 0 12 6"><path d="M0 6L6 0L12 6z" fill="#2a8fea"/></svg>
<div class="abs" style="left:453px;top:227px;width:1px;height:430px;background:#e6e6e6"></div>
<div class="abs row" style="top:226.5px"><span>姓名</span></div>
<div class="abs row" style="top:262.7px"><span>电话</span></div>
<div class="abs row" style="top:298.9px"><span>邮箱</span></div>
<div class="abs row" style="top:335.1px"><span>验证码</span></div>
<div class="abs row" style="top:371.3px"><span>留言</span></div>
<div class="abs row" style="top:407.5px"><span style="color:#4dac51;font-weight:700">文本框</span></div>
<svg id="rowicons" class="abs" style="left:432px;top:227px" width="20" height="216" viewBox="0 0 20 216">
<path d="M4.799999999999999 17.4C6.799999999999999 12.999999999999998 12.6 12.999999999999998 14.6 17.4C12.6 21.799999999999997 6.799999999999999 21.799999999999997 4.799999999999999 17.4z" fill="#4a4a4a"/><circle cx="9.7" cy="17.4" r="2.100" fill="#fff"/><circle cx="9.7" cy="17.4" r="1.150" fill="#4a4a4a"/>
<path d="M4.799999999999999 53.5C6.799999999999999 49.1 12.6 49.1 14.6 53.5C12.6 57.9 6.799999999999999 57.9 4.799999999999999 53.5z" fill="#4a4a4a"/><circle cx="9.7" cy="53.5" r="1.900" fill="#ddd"/><circle cx="9.7" cy="53.5" r="1.100" fill="#4a4a4a"/><path d="M6.3999999999999995 58.8L15.2 50.5" stroke="#fff" stroke-width="1.300"/><path d="M5.299999999999999 57.9L14.299999999999999 49.3" stroke="#4a4a4a" stroke-width="1.100"/>
<path d="M4.799999999999999 89.6C6.799999999999999 85.19999999999999 12.6 85.19999999999999 14.6 89.6C12.6 94.0 6.799999999999999 94.0 4.799999999999999 89.6z" fill="#4a4a4a"/><circle cx="9.7" cy="89.6" r="2.100" fill="#fff"/><circle cx="9.7" cy="89.6" r="1.150" fill="#4a4a4a"/>
<path d="M4.799999999999999 125.7C6.799999999999999 121.3 12.6 121.3 14.6 125.7C12.6 130.1 6.799999999999999 130.1 4.799999999999999 125.7z" fill="#4a4a4a"/><circle cx="9.7" cy="125.7" r="1.900" fill="#ddd"/><circle cx="9.7" cy="125.7" r="1.100" fill="#4a4a4a"/><path d="M6.3999999999999995 131.0L15.2 122.7" stroke="#fff" stroke-width="1.300"/><path d="M5.299999999999999 130.1L14.299999999999999 121.5" stroke="#4a4a4a" stroke-width="1.100"/>
<path d="M4.799999999999999 161.8C6.799999999999999 157.4 12.6 157.4 14.6 161.8C12.6 166.20000000000002 6.799999999999999 166.20000000000002 4.799999999999999 161.8z" fill="#4a4a4a"/><circle cx="9.7" cy="161.8" r="2.100" fill="#fff"/><circle cx="9.7" cy="161.8" r="1.150" fill="#4a4a4a"/>
<g>
<path d="M7.600 193.400c.3-2.600 5.300-2.600 5.600 0z" fill="#b4b5b8" stroke="#8d8e92" stroke-width=".600"/>
<rect x="4.900" y="193.200" width="11" height="2.300" rx=".900" fill="#8d8e92"/>
<path d="M5.900 195.600h9l-.5 8.200a1 1 0 0 1-1 .900h-6a1 1 0 0 1-1-.900z" fill="#dfe1e4" stroke="#8d8e92" stroke-width=".900"/>
<path d="M8.400 196.500v7.200M10.400 196.500v7.200M12.400 196.500v7.200" stroke="#c3c5c9" stroke-width=".800"/>
</g>
</svg>
<div class="abs" style="left:361px;top:616px;width:73px;height:27px;background:#2196f3;border-radius:5px;color:#fff;font-size:12.700px;line-height:27px;text-align:center;font-weight:500">添加</div>

<!-- right side fields -->
<div class="abs flabel" style="top:240px">字段类型</div>
<div class="abs flabel" style="top:275px">标签文本</div>
<div class="abs flabel" style="top:309px">提示文本</div>
<div class="abs flabel" style="top:343px">内容文本</div>
<div class="abs flabel" style="top:373.900px">必选</div>
<div class="abs flabel" style="top:403.5px">拉伸</div>
<div class="abs flabel" style="top:432.5px">显示标签</div>
<!-- radios -->
<div class="abs radio" style="left:544px;top:404.5px"></div>
<div class="abs rl" style="left:562px;top:403.5px">开启</div>
<div class="abs radio on" style="left:600px;top:404.5px"></div>
<div class="abs rl" style="left:618px;top:403.5px">关闭</div>
<div class="abs radio on" style="left:544px;top:433.5px"></div>
<div class="abs rl" style="left:562px;top:432.5px">显示</div>
<div class="abs radio" style="left:600px;top:433.5px"></div>
<div class="abs rl" style="left:618px;top:432.5px">隐藏</div>
<!-- select -->
<div class="abs" style="left:544.500px;top:235.500px;width:184px;height:25px;border:1px solid #7aa7e6;border-radius:3px;background:linear-gradient(#fafafa,#ededed);box-shadow:0 0 2.500px rgba(90,140,230,.75)"></div>
<div class="abs" style="left:547.900px;top:240.600px;font-size:10.900px;line-height:16px;color:#333;white-space:nowrap">单行文本框</div>
<svg class="abs" style="left:714px;top:244.500px" width="11" height="8" viewBox="0 0 11 8"><path d="M1.500 1.500l4 4l4-4" fill="none" stroke="#3c3c3c" stroke-width="1.900"/></svg>
<!-- dropdown -->
<div class="abs" style="left:544.500px;top:261.500px;width:184px;height:139.500px;border:1px solid #7b7b7b;background:#f8f8f8;overflow:hidden;box-shadow:1px 2px 3px rgba(0,0,0,.22)"></div>
<div class="abs" style="left:545.500px;top:262.500px;width:182px;height:137.500px;overflow:hidden">
<div class="abs opt" style="left:0;top:0.5px">请选择</div>
<div class="abs opt" style="left:0;top:15.8px">单行文本框</div>
<div class="abs opt" style="left:0;top:31.1px">多行文本框</div>
<div class="abs opt" style="left:0;top:46.4px">单选</div>
<div class="abs opt" style="left:0;top:61.7px">多选</div>
<div class="abs opt" style="left:0;top:77px">下拉</div>
<div class="abs opt" style="left:0;top:92.3px">附件上传</div>
<div class="abs opt" style="left:0;top:107.6px">验证码</div>
<div class="abs opt" style="left:0;top:122.500px;height:15.500px;background:#1e90ff;color:#fff">纯文本</div>
</div>
<!-- red annotation boxes -->
<div class="abs" style="left:481.500px;top:235px;width:256.500px;height:33px;border:2.800px solid #e7363c"></div>
<div class="abs" style="left:540.300px;top:381.700px;width:53.500px;height:24.200px;border:2.600px solid #e7363c"></div>
</body>
</html>
